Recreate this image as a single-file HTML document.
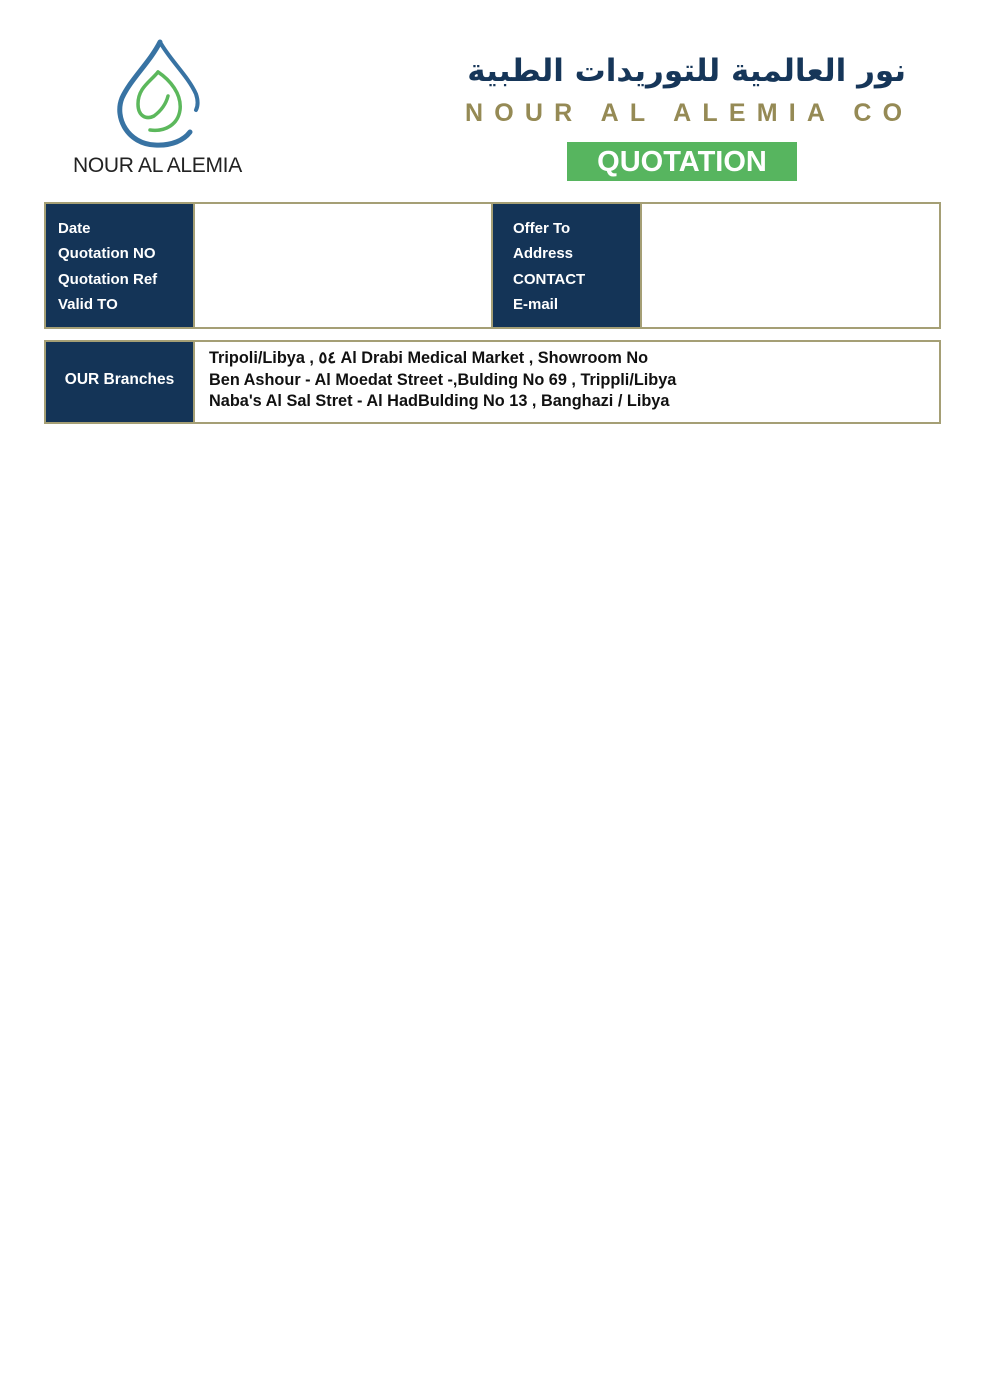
<!DOCTYPE html>
<html><head><meta charset="utf-8"><style>
body{margin:0;width:989px;height:1400px;background:#fff;position:relative;font-family:"Liberation Sans",sans-serif;overflow:hidden}
.a{position:absolute}
.dk{background:#143457;color:#fff;font-weight:bold;font-size:15px}
.lbl{line-height:25.3px;padding:12px 0 0 12px;box-sizing:border-box}
</style></head><body>
<svg class="a" style="left:0;top:0" width="260" height="160" viewBox="0 0 260 160">
<path d="M160 42 C150 62 130 80 122 98 C114 118 128 144 155 145 C172 146 184 140 190 132" fill="none" stroke="#3873a3" stroke-width="5" stroke-linecap="round"/>
<path d="M160 42 C170 60 188 76 196 94 C198 100 198 106 196 110" fill="none" stroke="#3873a3" stroke-width="4" stroke-linecap="round"/>
<path d="M158 72 C150 82 138 88 138 104 C138 116 146 120 154 116 C162 110 166 104 168 96" fill="none" stroke="#5cb85c" stroke-width="3.5" stroke-linecap="round"/>
<path d="M158 72 C170 80 182 94 180 110 C178 124 166 132 150 130" fill="none" stroke="#5cb85c" stroke-width="3.5" stroke-linecap="round"/>
</svg>
<div class="a" style="left:73px;top:154px;font-size:21px;color:#222;letter-spacing:-0.3px">NOUR AL ALEMIA</div>
<div class="a" dir="rtl" style="left:400px;top:47px;width:506px;text-align:right;font-family:'DejaVu Sans',sans-serif;font-weight:bold;font-size:31px;color:#163659;line-height:48px;white-space:nowrap">نور العالمية للتوريدات الطبية</div>
<div class="a" style="left:465px;top:99px;font-size:25px;font-weight:bold;color:#958a55;letter-spacing:11.2px;white-space:nowrap">NOUR AL ALEMIA CO</div>
<div class="a" style="left:567px;top:142px;width:230px;height:39px;background:#57b55f;color:#fff;font-weight:bold;font-size:29px;text-align:center;line-height:40px">QUOTATION</div>

<div class="a" style="left:44px;top:202px;width:897px;height:127px;border:2px solid #a59f75;box-sizing:border-box"></div>
<div class="a dk lbl" style="left:46px;top:204px;width:147px;height:123px">Date<br>Quotation NO<br>Quotation Ref<br>Valid TO</div>
<div class="a" style="left:193px;top:204px;width:2px;height:123px;background:#a59f75"></div>
<div class="a" style="left:491px;top:204px;width:2px;height:123px;background:#a59f75"></div>
<div class="a dk lbl" style="left:493px;top:204px;width:147px;height:123px;padding-left:20px">Offer To<br>Address<br>CONTACT<br>E-mail</div>
<div class="a" style="left:640px;top:204px;width:2px;height:123px;background:#a59f75"></div>

<div class="a" style="left:44px;top:340px;width:897px;height:84px;border:2px solid #a59f75;box-sizing:border-box"></div>
<div class="a dk" style="left:46px;top:342px;width:147px;height:80px;line-height:76px;text-align:center;font-size:15.5px">OUR Branches</div>
<div class="a" style="left:193px;top:342px;width:2px;height:80px;background:#a59f75"></div>
<div class="a" style="left:209px;top:348px;font-size:16.3px;font-weight:bold;color:#111;line-height:21.5px;white-space:nowrap">Tripoli/Libya , ٥٤ Al Drabi Medical Market , Showroom No<br>Ben Ashour - Al Moedat Street -,Bulding No 69 , Trippli/Libya<br>Naba's Al Sal Stret - Al HadBulding No 13 , Banghazi / Libya</div>
</body></html>
